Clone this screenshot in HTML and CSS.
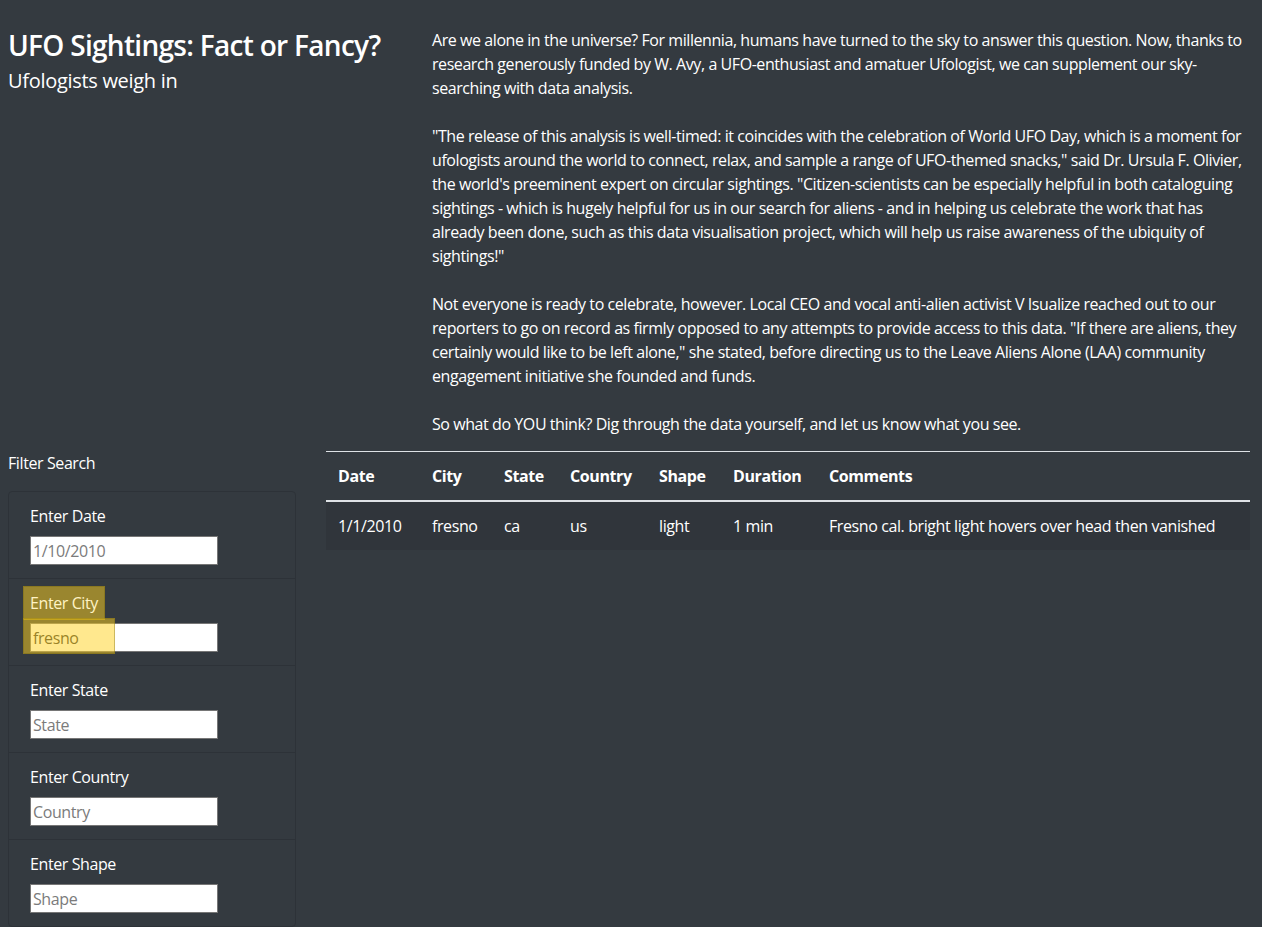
FILE: index.html
```html
<!DOCTYPE html>
<html lang="en">
<head>
<meta charset="utf-8">
<title>UFO Sightings: Fact or Fancy?</title>
<link rel="stylesheet" href="styles.css">
</head>
<body>
  <div class="intro">
    <div class="intro-title">
      <h1 class="title">UFO Sightings: Fact or Fancy?</h1>
      <h2 class="subtitle">Ufologists weigh in</h2>
    </div>
    <div class="intro-text">
      <p>Are we alone in the universe? For millennia, humans have turned to the sky to answer this question. Now, thanks to research generously funded by W. Avy, a UFO-enthusiast and amatuer Ufologist, we can supplement our sky-searching with data analysis.</p>
      <p>"The release of this analysis is well-timed: it coincides with the celebration of World UFO Day, which is a moment for ufologists around the world to connect, relax, and sample a range of UFO-themed snacks," said Dr. Ursula F. Olivier, the world's preeminent expert on circular sightings. "Citizen-scientists can be especially helpful in both cataloguing sightings - which is hugely helpful for us in our search for aliens - and in helping us celebrate the work that has already been done, such as this data visualisation project, which will help us raise awareness of the ubiquity of sightings!"</p>
      <p>Not everyone is ready to celebrate, however. Local CEO and vocal anti-alien activist V Isualize reached out to our reporters to go on record as firmly opposed to any attempts to provide access to this data. "If there are aliens, they certainly would like to be left alone," she stated, before directing us to the Leave Aliens Alone (LAA) community engagement initiative she founded and funds.</p>
      <p>So what do YOU think? Dig through the data yourself, and let us know what you see.</p>
    </div>
  </div>

  <div class="main">
    <aside class="filters">
      <div class="filters-heading">Filter Search</div>
      <ul class="filter-list">
        <li class="filter-item">
          <label class="filter-label" for="datetime">Enter Date</label>
          <div class="field"><input class="filter-input" id="datetime" type="text" placeholder="1/10/2010"></div>
        </li>
        <li class="filter-item">
          <label class="filter-label" for="city"><span class="hl hl-label">Enter City</span></label>
          <div class="field"><input class="filter-input" id="city" type="text" value="fresno"><span class="hl hl-input"></span></div>
        </li>
        <li class="filter-item">
          <label class="filter-label" for="state">Enter State</label>
          <div class="field"><input class="filter-input" id="state" type="text" placeholder="State"></div>
        </li>
        <li class="filter-item">
          <label class="filter-label" for="country">Enter Country</label>
          <div class="field"><input class="filter-input" id="country" type="text" placeholder="Country"></div>
        </li>
        <li class="filter-item">
          <label class="filter-label" for="shape">Enter Shape</label>
          <div class="field"><input class="filter-input" id="shape" type="text" placeholder="Shape"></div>
        </li>
      </ul>
    </aside>

    <section class="results">
      <table class="ufo-table">
        <colgroup>
          <col class="c-date"><col class="c-city"><col class="c-state"><col class="c-country"><col class="c-shape"><col class="c-duration"><col class="c-comments">
        </colgroup>
        <thead>
          <tr>
            <th>Date</th><th>City</th><th>State</th><th>Country</th><th>Shape</th><th>Duration</th><th>Comments</th>
          </tr>
        </thead>
        <tbody>
          <tr>
            <td>1/1/2010</td><td>fresno</td><td>ca</td><td>us</td><td>light</td><td>1 min</td><td>Fresno cal. bright light hovers over head then vanished</td>
          </tr>
        </tbody>
      </table>
    </section>
  </div>
</body>
</html>
```

FILE: styles.css
```css
* { box-sizing: border-box; }

html, body {
  margin: 0;
  padding: 0;
}

body {
  background: #343a40;
  color: #fff;
  font-family: "Open Sans", "Noto Sans", "Liberation Sans", sans-serif;
  font-size: 16px;
  line-height: 24px;
  letter-spacing: -0.4px;
}

.intro {
  display: flex;
  padding-top: 28px;
}

.intro-title {
  width: 432px;
  flex: none;
  padding-left: 8px;
}

.title {
  margin: 0;
  font-size: 28px;
  line-height: 34px;
  font-weight: 600;
  letter-spacing: -0.7px;
}

.subtitle {
  margin: 4px 0 0;
  font-size: 20px;
  line-height: 30px;
  font-weight: 400;
  letter-spacing: -0.3px;
}

.intro-text {
  flex: 1;
  padding-right: 11px;
}

.intro-text p {
  margin: 0 0 24px;
  letter-spacing: -0.43px;
}

.intro-text p:last-child {
  margin-bottom: 15px;
}

.main {
  display: flex;
  gap: 30px;
  padding-left: 8px;
  padding-right: 12px;
}

.filters {
  width: 288px;
  flex: none;
}

.filters-heading {
  margin-bottom: 16px;
}

.filter-list {
  list-style: none;
  margin: 0;
  padding: 0;
  border: 1px solid #2d3238;
  border-radius: 4px;
}

.filter-item {
  padding: 12px 20px 13px 21px;
  border-top: 1px solid #2d3238;
}

.filter-item:first-child {
  border-top: 0;
}

.filter-label {
  display: block;
  margin-bottom: 8px;
}

.field {
  position: relative;
  width: 188px;
}

.filter-input {
  display: block;
  width: 188px;
  height: 29px;
  margin: 0;
  padding: 1px 2px;
  border: 1px solid #767676;
  background: #fff;
  color: #333;
  font-family: inherit;
  font-size: 16px;
  letter-spacing: -0.4px;
  outline: none;
}

.filter-input::placeholder {
  color: #7b7b7b;
}

.hl {
  background: rgba(255, 210, 30, 0.5);
  box-shadow: inset 0 0 0 1px rgba(110, 95, 10, 0.35);
}

.hl-label {
  display: inline-block;
  padding: 5px 7px;
  margin: -5px -7px;
  color: #fff3c4;
}

.hl-input {
  position: absolute;
  left: -7px;
  top: -5px;
  width: 92px;
  height: 36px;
  pointer-events: none;
}

.results {
  flex: 1;
  min-width: 0;
}

.ufo-table {
  width: 100%;
  border-collapse: collapse;
  table-layout: fixed;
  color: #fff;
}

.c-date { width: 94px; }
.c-city { width: 72px; }
.c-state { width: 66px; }
.c-country { width: 89px; }
.c-shape { width: 74px; }
.c-duration { width: 96px; }

.ufo-table th,
.ufo-table td {
  padding: 12px;
  text-align: left;
  vertical-align: top;
  white-space: nowrap;
}

.ufo-table th {
  font-weight: 700;
  border-top: 1px solid #dee2e6;
  border-bottom: 2px solid #dee2e6;
}

.ufo-table tbody tr {
  background: #30353b;
}
```
